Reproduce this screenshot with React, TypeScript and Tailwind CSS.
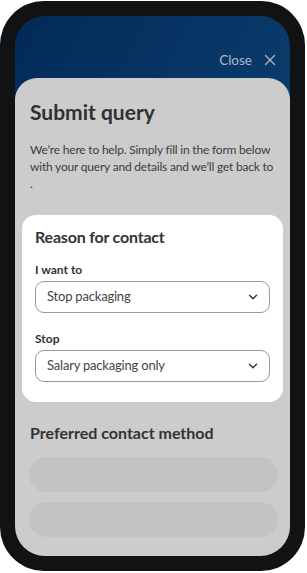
import { ChevronDown, X } from 'lucide-react'

function Select({ value }: { value: string }) {
  return (
    <div className="mt-[3px] flex h-[32px] items-center justify-between rounded-[9px] border border-[#9b9b9b] bg-white pl-[11px] pr-[9px]">
      <span className="text-[13px] tracking-[-0.2px] text-[#444]">{value}</span>
      <ChevronDown size={14} strokeWidth={2.4} className="text-[#333]" />
    </div>
  )
}

export default function App() {
  return (
    <div className="h-[573px] w-[307px] bg-white pt-[1px]" style={{ fontFamily: 'Lato, "Noto Sans", sans-serif' }}>
      <div className="h-[570px] w-[305px] rounded-[44px] bg-[#111214] p-[15px]">
        <div className="flex h-full flex-col overflow-hidden rounded-[30px] bg-gradient-to-br from-[#032a59] to-[#11497a]">
          <div className="flex h-[62px] shrink-0 items-end justify-end gap-[9px] pb-[9px] pr-[11px] text-[#aeb8c6]">
            <span className="mb-[1px] text-[13.5px] leading-[16px]">Close</span>
            <X size={18} strokeWidth={1.7} />
          </div>
          <div className="flex-1 rounded-t-[22px] bg-[#cccccc] px-[15px] pt-[20px] text-[#333]">
            <h1 className="text-[21px] font-bold leading-[28px] text-[#303030]">Submit query</h1>
            <p className="mt-[15px] whitespace-nowrap text-[12px] leading-[17px] tracking-[-0.2px] text-[#3c3c3c]">
              We’re here to help. Simply fill in the form below
              <br />
              with your query and details and we’ll get back to
              <br />.
            </p>
            <div className="-mx-[8px] mt-[23px] rounded-[14px] bg-white px-[13px] pb-[20px] pt-[10px]">
              <h2 className="text-[16px] font-bold leading-[24px] tracking-[-0.2px] text-[#333]">Reason for contact</h2>
              <div className="mt-[13px] text-[12px] font-bold leading-[16px] text-[#333]">I want to</div>
              <Select value="Stop packaging" />
              <div className="mt-[18px] text-[12px] font-bold leading-[16px] text-[#333]">Stop</div>
              <Select value="Salary packaging only" />
            </div>
            <h2 className="mt-[19px] text-[16px] font-bold leading-[24px] text-[#333]">Preferred contact method</h2>
            <div className="-ml-[1px] -mr-[3px] mt-[12px] flex flex-col gap-[10px]">
              <div className="h-[35px] rounded-full bg-[#c3c3c3]" />
              <div className="h-[35px] rounded-full bg-[#c3c3c3]" />
            </div>
          </div>
        </div>
      </div>
    </div>
  )
}
